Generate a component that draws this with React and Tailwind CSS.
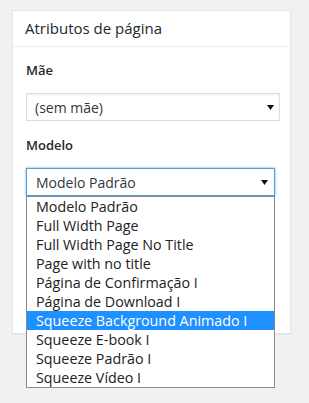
import React from 'react';

const templates = [
  'Modelo Padrão',
  'Full Width Page',
  'Full Width Page No Title',
  'Page with no title',
  'Página de Confirmação I',
  'Página de Download I',
  'Squeeze Background Animado I',
  'Squeeze E-book I',
  'Squeeze Padrão I',
  'Squeeze Vídeo I',
];

const Arrow = () => (
  <svg width="7" height="5" viewBox="0 0 7 5" className="shrink-0">
    <path d="M0 0 H7 L3.5 5 Z" fill="#111" />
  </svg>
);

export default function App() {
  const selected = 6;

  return (
    <div
      className="h-[403px] w-[309px] bg-[#f1f1f1] pt-[10px] pl-[12px] text-[#23282d]"
      style={{ fontFamily: '"Open Sans", "Noto Sans", sans-serif' }}
    >
      {/* Meta box */}
      <div className="w-[279px] bg-white border border-[#e5e5e5] shadow-[0_1px_1px_rgba(0,0,0,0.04)]">
        <div className="h-[36px] flex items-center px-[12px] border-b border-[#eee] text-[15px] text-[#23282d]">
          Atributos de página
        </div>

        <div className="relative px-[13px] pt-[14px]">
          <div className="text-[13px] leading-[18px] font-semibold text-[#23282d]">Mãe</div>
          <div className="mt-[14px] h-[28px] w-[254px] flex items-center justify-between pl-[8px] pr-[5px] border border-[#ddd] shadow-[inset_0_1px_2px_rgba(0,0,0,0.07)] text-[14px] text-[#32373c]">
            <span>(sem mãe)</span>
            <Arrow />
          </div>

          <div className="mt-[15px] text-[13px] leading-[18px] font-semibold text-[#23282d]">Modelo</div>
          <div className="mt-[14px] h-[28px] w-[249px] flex items-center justify-between pl-[9px] pr-[6px] border border-[#5b9dd9] shadow-[0_0_2px_rgba(30,140,190,0.8)] text-[14px] text-[#32373c]">
            <span>Modelo Padrão</span>
            <Arrow />
          </div>

          <div className="h-[137px]" />

          {/* Open dropdown list */}
          <div className="absolute left-[13px] top-[149px] w-[249px] bg-white border border-[#8a8a8a] z-10">
            {templates.map((t, i) => (
              <div
                key={t}
                className={`h-[19px] leading-[19px] pl-[9px] text-[14.3px] whitespace-nowrap ${
                  i === selected ? 'bg-[#1e90ff] text-white' : 'text-[#222]'
                }`}
              >
                {t}
              </div>
            ))}
          </div>
        </div>
      </div>
    </div>
  );
}
